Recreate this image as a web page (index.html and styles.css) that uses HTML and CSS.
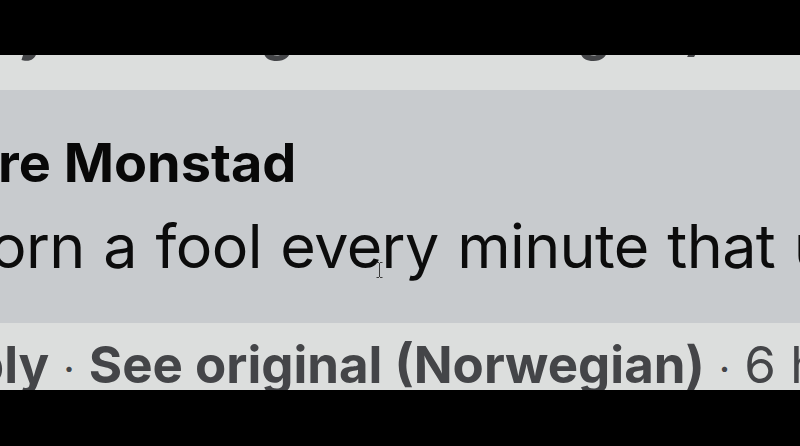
FILE: index.html
```html
<!DOCTYPE html>
<html lang="en">
<head>
  <meta charset="UTF-8" />
  <meta name="viewport" content="width=device-width, initial-scale=1.0"/>
  <title>Comment</title>
  <link rel="stylesheet" href="styles.css">
</head>
<body>
  <div class="screen">
    <div class="thread">
      <div class="comment-meta meta-prev">
        <span class="meta-link">ply</span>
        <span class="meta-dot">·</span>
        <span class="meta-link">See original (Norwegian)</span>
        <span class="meta-dot">·</span>
        <span class="meta-time">6 h</span>
      </div>

      <div class="comment-bubble">
        <div class="comment-author">re Monstad</div>
        <div class="comment-text">orn a fool every minute that u</div>
        <!-- text cursor -->
        <svg class="ibeam" width="7" height="16" viewBox="0 0 7 16">
          <path d="M0.5 0.5h2.5M4 0.5h2.5M3.5 1v14M0.5 15.5h2.5M4 15.5h2.5" stroke="#3a3a3a" stroke-width="1" fill="none"/>
        </svg>
      </div>

      <div class="comment-meta">
        <span class="meta-link">ply</span>
        <span class="meta-dot">·</span>
        <span class="meta-link">See original (Norwegian)</span>
        <span class="meta-dot">·</span>
        <span class="meta-time">6 h</span>
      </div>
    </div>
  </div>
</body>
</html>
```

FILE: styles.css
```css
* {
  margin: 0;
  padding: 0;
  box-sizing: border-box;
  font-family: 'Inter', 'Liberation Sans', sans-serif;
}

body {
  background-color: #000;
  width: 800px;
  height: 446px;
  overflow: hidden;
  padding-top: 55px;
}

.screen {
  height: 335px;
  background-color: #dcdedd;
  overflow: hidden;
}

.thread {
  display: flex;
  flex-direction: column;
}

.comment-meta {
  display: flex;
  align-items: baseline;
  white-space: nowrap;
  font-size: 51px;
  line-height: 60px;
  color: #444548;
  margin-left: -28px;
  margin-top: 12px;
}

.meta-prev {
  margin-top: -53px;
}

.meta-link {
  font-weight: 700;
}

.meta-dot {
  margin: 0 14px;
  font-size: 40px;
  line-height: 40px;
}

.meta-time {
  font-weight: 400;
}

.comment-bubble {
  position: relative;
  margin-top: 28px;
  height: 233px;
  background-color: #c8cbce;
  padding-top: 41px;
  white-space: nowrap;
}

.comment-author {
  font-size: 54px;
  line-height: 64px;
  font-weight: 700;
  color: #080808;
  margin-left: -2px;
}

.comment-text {
  margin-top: 14px;
  font-size: 61px;
  line-height: 74px;
  letter-spacing: -0.6px;
  word-spacing: 2px;
  color: #0c0c0c;
  margin-left: -10px;
}

.ibeam {
  position: absolute;
  left: 376px;
  top: 172px;
}
```
